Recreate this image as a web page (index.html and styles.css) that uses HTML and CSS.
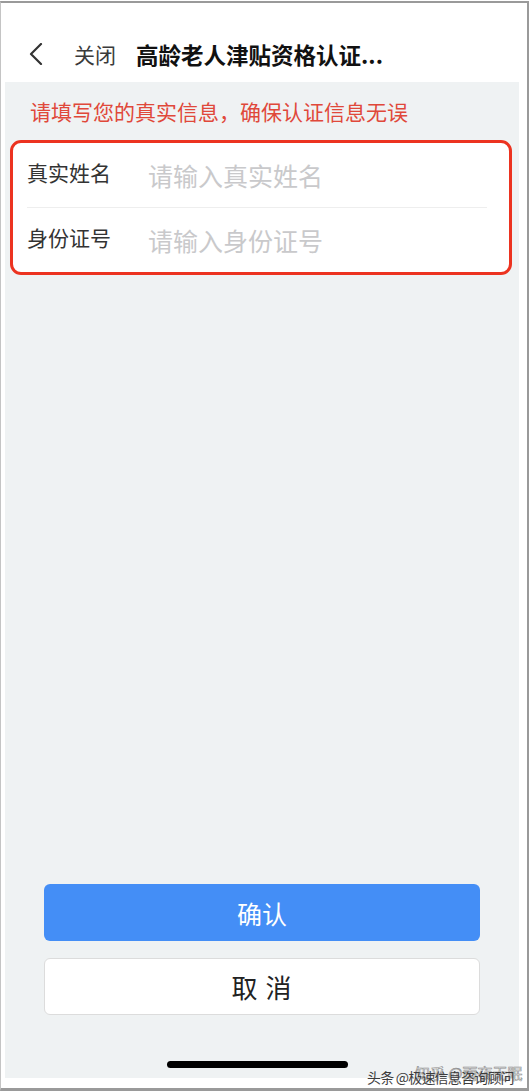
FILE: index.html
```html
<!DOCTYPE html>
<html lang="zh">
<head>
<meta charset="utf-8">
<link rel="stylesheet" href="styles.css">
</head>
<body>
<div class="frame">
  <header class="header">
    <svg class="back" width="16" height="22" viewBox="0 0 16 22"><path d="M13 1 L3 11 L13 21" fill="none" stroke="#333" stroke-width="2.2" stroke-linecap="round" stroke-linejoin="round"/></svg>
    <span class="close">关闭</span>
    <span class="title">高龄老人津贴资格认证...</span>
  </header>
  <main class="main">
    <p class="notice">请填写您的真实信息，确保认证信息无误</p>
    <div class="card">
      <div class="row">
        <span class="label">真实姓名</span>
        <span class="ph ph1">请输入真实姓名</span>
      </div>
      <div class="divider"></div>
      <div class="row">
        <span class="label">身份证号</span>
        <span class="ph ph2">请输入身份证号</span>
      </div>
    </div>
    <div class="spacer"></div>
    <div class="actions">
      <div class="btn primary">确认</div>
      <div class="btn secondary">取 消</div>
    </div>
    <div class="home"></div>
  </main>
  <div class="wm wm-back">知乎 @雨夜无眠</div>
  <div class="wm wm-front">头条 @极速信息咨询顾问</div>
</div>
</body>
</html>
```

FILE: styles.css
```css
html, body {
  margin: 0;
  padding: 0;
  background: #ffffff;
}
body {
  font-family: "Noto Sans CJK SC", "Noto Sans", sans-serif;
  width: 531px;
  height: 1092px;
  overflow: hidden;
}
.frame {
  position: relative;
  box-sizing: border-box;
  margin-top: 1px;
  width: 529px;
  height: 1090px;
  border-top: 2px solid #9a9a9a;
  border-left: 1px solid #c4c4c4;
  border-right: 2px solid #9a9a9a;
  border-bottom: 3px solid #9a9a9a;
  display: flex;
  flex-direction: column;
  background: #fff;
}
.header {
  height: 79px;
  flex: none;
  display: flex;
  align-items: center;
  padding-left: 27px;
  padding-top: 22px;
  box-sizing: border-box;
}
.back {
  display: block;
  margin-top: 1px;
}
.close {
  margin-left: 30px;
  font-size: 21px;
  color: #3a3a3a;
  line-height: 28px;
}
.title {
  margin-left: 20px;
  font-size: 22.5px;
  font-weight: bold;
  color: #111;
  line-height: 30px;
}
.main {
  flex: none;
  height: 996px;
  margin-left: 4px;
  margin-right: 8px;
  background: #eff2f3;
  display: flex;
  flex-direction: column;
}
.notice {
  margin: 14px 0 0 25px;
  font-size: 21px;
  line-height: 30px;
  color: #e0483a;
}
.card {
  margin: 14px 7px 0 5px;
  border: 3px solid #ec3320;
  border-radius: 11px;
  background: #fff;
  padding: 0 22px 0 14px;
}
.row {
  height: 64px;
  display: flex;
  align-items: center;
}
.label {
  width: 121px;
  font-size: 21px;
  color: #333;
  line-height: 28px;
  margin-top: -6px;
}
.ph {
  font-size: 25px;
  color: #c9c9cb;
  line-height: 32px;
}
.divider {
  height: 1px;
  background: #eeeeee;
}
.spacer {
  flex: 1;
}
.actions {
  display: flex;
  flex-direction: column;
  gap: 17px;
  padding: 0 39px 0 39px;
}
.btn {
  height: 57px;
  box-sizing: border-box;
  border-radius: 6px;
  display: flex;
  align-items: center;
  justify-content: center;
  font-size: 25px;
}
.primary {
  background: #448ef6;
  color: #fff;
}
.secondary {
  background: #fff;
  border: 1px solid #dcdcdc;
  color: #222;
  font-size: 26px;
  letter-spacing: 1px;
}
.home {
  margin: 46px auto 10px;
  width: 181px;
  height: 7px;
  border-radius: 4px;
  background: #000;
  position: relative;
  left: -5px;
}
.wm {
  position: absolute;
  line-height: 20px;
  white-space: nowrap;
}
.wm-back {
  left: 414px;
  top: 1060px;
  color: rgba(255,255,255,0.9);
  -webkit-text-stroke: 0.6px #8a8a8a;
  font-size: 15px;
}
.wm-front {
  left: 366px;
  top: 1064px;
  color: #3c3c3c;
  font-size: 14px;
  letter-spacing: -0.8px;
}
```
